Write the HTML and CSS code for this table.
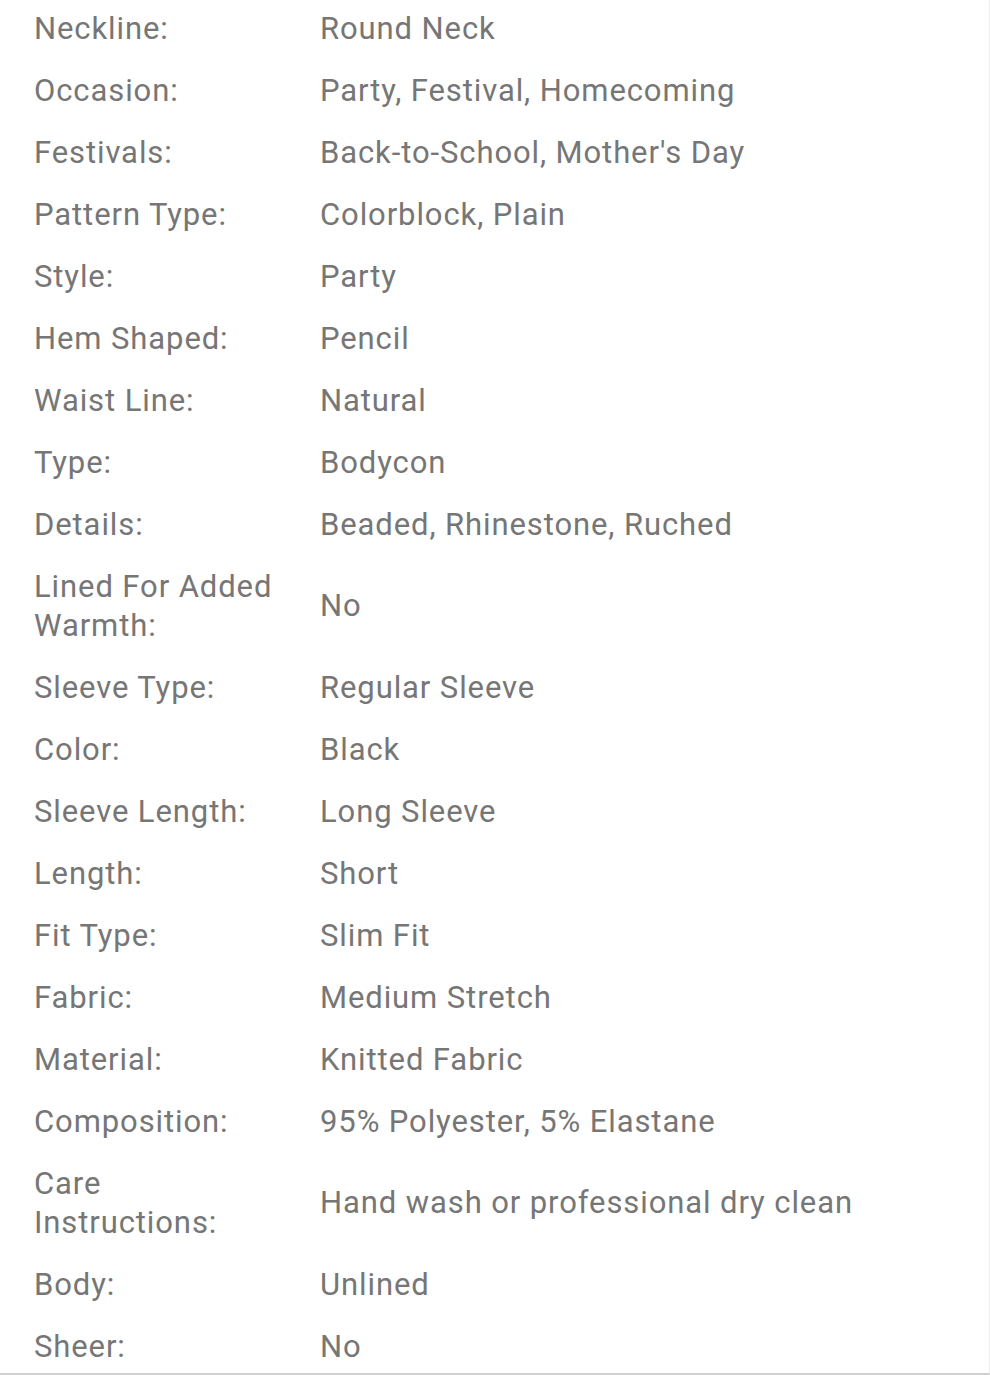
FILE: index.html
```html
<!DOCTYPE html>
<html>
<head>
<meta charset="utf-8">
<link rel="stylesheet" href="styles.css">
</head>
<body>
<div class="panel">
  <table class="specs">
    <tr><td class="k">Neckline:</td><td class="v">Round Neck</td></tr>
    <tr><td class="k">Occasion:</td><td class="v">Party, Festival, Homecoming</td></tr>
    <tr><td class="k">Festivals:</td><td class="v">Back-to-School, Mother's Day</td></tr>
    <tr><td class="k">Pattern Type:</td><td class="v">Colorblock, Plain</td></tr>
    <tr><td class="k">Style:</td><td class="v">Party</td></tr>
    <tr><td class="k">Hem Shaped:</td><td class="v">Pencil</td></tr>
    <tr><td class="k">Waist Line:</td><td class="v">Natural</td></tr>
    <tr><td class="k">Type:</td><td class="v">Bodycon</td></tr>
    <tr><td class="k">Details:</td><td class="v">Beaded, Rhinestone, Ruched</td></tr>
    <tr><td class="k">Lined For Added Warmth:</td><td class="v">No</td></tr>
    <tr><td class="k">Sleeve Type:</td><td class="v">Regular Sleeve</td></tr>
    <tr><td class="k">Color:</td><td class="v">Black</td></tr>
    <tr><td class="k">Sleeve Length:</td><td class="v">Long Sleeve</td></tr>
    <tr><td class="k">Length:</td><td class="v">Short</td></tr>
    <tr><td class="k">Fit Type:</td><td class="v">Slim Fit</td></tr>
    <tr><td class="k">Fabric:</td><td class="v">Medium Stretch</td></tr>
    <tr><td class="k">Material:</td><td class="v">Knitted Fabric</td></tr>
    <tr><td class="k">Composition:</td><td class="v">95% Polyester, 5% Elastane</td></tr>
    <tr><td class="k">Care Instructions:</td><td class="v">Hand wash or professional dry clean</td></tr>
    <tr><td class="k">Body:</td><td class="v">Unlined</td></tr>
    <tr><td class="k">Sheer:</td><td class="v">No</td></tr>
  </table>
</div>
</body>
</html>
```

FILE: styles.css
```css
html, body {
  margin: 0;
  padding: 0;
  background: #fff;
}
.panel {
  width: 989px;
  height: 1376px;
  margin-top: -3px;
  border-right: 1px solid #ececec;
  border-bottom: 2px solid #cfcfcf;
  overflow: hidden;
}
.specs {
  border-collapse: collapse;
  margin-left: 34px;
  font-family: Roboto, "Liberation Sans", sans-serif;
  font-size: 31px;
  letter-spacing: 0.9px;
  line-height: 39px;
  color: #767676;
}
.specs td {
  padding: 11.5px 0;
  vertical-align: middle;
}
.specs .k {
  width: 248px;
  padding-right: 38px;
}
.specs .v {
  white-space: nowrap;
}
```
